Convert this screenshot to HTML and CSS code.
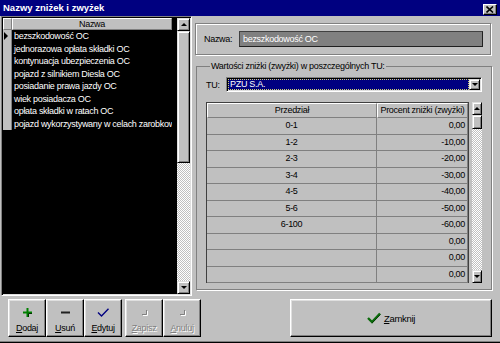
FILE: index.html
```html
<!DOCTYPE html>
<html lang="pl">
<head>
    <meta charset="UTF-8">
    <meta name="viewport" content="width=device-width, initial-scale=1.0">
    <title>Nazwy zniżek i zwyżek</title>
    <link rel="stylesheet" href="styles.css">
</head>
<body>
<div id="window">
    <div id="titlebar">
        <span class="title">Nazwy zniżek i zwyżek</span>
        <span class="close-btn">
            <svg width="8" height="7" viewBox="0 0 8 7"><path d="M0.5 0.5 L7 6.5 M7 0.5 L0.5 6.5" stroke="#000" stroke-width="1.6"/></svg>
        </span>
    </div>

    <div id="main">
        <!-- lista nazw -->
        <div class="list">
            <div class="list-grid">
                <div class="list-head">
                    <span class="ind-head"></span>
                    <span class="name-head">Nazwa</span>
                </div>
                <div class="list-row"><span class="ind"><span class="arrow-right"></span></span><span class="cell">bezszkodowość OC</span></div>
                <div class="list-row"><span class="ind"></span><span class="cell">jednorazowa opłata składki OC</span></div>
                <div class="list-row"><span class="ind"></span><span class="cell">kontynuacja ubezpieczenia OC</span></div>
                <div class="list-row"><span class="ind"></span><span class="cell">pojazd z silnikiem Diesla OC</span></div>
                <div class="list-row"><span class="ind"></span><span class="cell">posiadanie prawa jazdy OC</span></div>
                <div class="list-row"><span class="ind"></span><span class="cell">wiek posiadacza OC</span></div>
                <div class="list-row"><span class="ind"></span><span class="cell">opłata składki w ratach OC</span></div>
                <div class="list-row"><span class="ind"></span><span class="cell">pojazd wykorzystywany w celach zarobkowych OC</span></div>
            </div>
            <div class="vscroll">
                <div class="sb-btn"><span class="tri-up"></span></div>
                <div class="sb-thumb list-thumb"></div>
                <div class="sb-track"></div>
                <div class="sb-btn"><span class="tri-down"></span></div>
            </div>
        </div>

        <div class="right">
            <div class="name-group">
                <span class="name-label">Nazwa:</span>
                <div class="name-input">bezszkodowość OC</div>
            </div>

            <fieldset class="values">
                <legend>Wartości zniżki (zwyżki) w poszczególnych TU:</legend>
                <div class="tu-row">
                    <span class="tu-label">TU:</span>
                    <div class="combo">
                        <div class="combo-value"><span class="focus">PZU S.A.</span></div>
                        <div class="combo-btn"><span class="tri-down"></span></div>
                    </div>
                </div>
                <div class="grid-wrap">
                    <div class="grid">
                        <div class="grid-row head">
                            <span class="c1">Przedział</span>
                            <span class="c2">Procent zniżki (zwyżki)</span>
                        </div>
                        <div class="grid-row"><span class="c1">0-1</span><span class="c2">0,00</span></div>
                        <div class="grid-row"><span class="c1">1-2</span><span class="c2">-10,00</span></div>
                        <div class="grid-row"><span class="c1">2-3</span><span class="c2">-20,00</span></div>
                        <div class="grid-row"><span class="c1">3-4</span><span class="c2">-30,00</span></div>
                        <div class="grid-row"><span class="c1">4-5</span><span class="c2">-40,00</span></div>
                        <div class="grid-row"><span class="c1">5-6</span><span class="c2">-50,00</span></div>
                        <div class="grid-row"><span class="c1">6-100</span><span class="c2">-60,00</span></div>
                        <div class="grid-row"><span class="c1"></span><span class="c2">0,00</span></div>
                        <div class="grid-row"><span class="c1"></span><span class="c2">0,00</span></div>
                        <div class="grid-row"><span class="c1"></span><span class="c2">0,00</span></div>
                    </div>
                    <div class="vscroll">
                        <div class="sb-btn"><span class="tri-up"></span></div>
                        <div class="sb-thumb grid-thumb"></div>
                        <div class="sb-track"></div>
                        <div class="sb-btn"><span class="tri-down"></span></div>
                    </div>
                </div>
            </fieldset>
        </div>
    </div>

    <div id="bottom">
        <div class="tools">
            <div class="tool">
                <svg width="9" height="9" viewBox="0 0 9 9"><path d="M3.5 0h2v3.5h3.5v2h-3.5v3.5h-2v-3.5h-3.5v-2h3.5z" fill="#008000"/><path d="M5.5 9V5.5H9" stroke="#003000" stroke-width="1" fill="none"/></svg>
                <span><u>D</u>odaj</span>
            </div>
            <div class="tool">
                <svg width="9" height="9" viewBox="0 0 9 9"><rect x="0" y="3.5" width="9" height="2" fill="#202020"/></svg>
                <span><u>U</u>suń</span>
            </div>
            <div class="tool">
                <svg width="12" height="9" viewBox="0 0 12 9"><path d="M1 4.5 L4.5 8 L11.5 0.8" stroke="#000080" stroke-width="1.4" fill="none"/></svg>
                <span><u>E</u>dytuj</span>
            </div>
            <div class="tool disabled first-off">
                <svg width="9" height="9" viewBox="0 0 9 9"><path d="M2 6.5 H6.5 V2" stroke="#808080" fill="none"/><path d="M3 7.5 H7.5 V3" stroke="#fff" fill="none"/></svg>
                <span><u>Z</u>apisz</span>
            </div>
            <div class="tool disabled">
                <svg width="9" height="9" viewBox="0 0 9 9"><path d="M2 6.5 H6.5 V2" stroke="#808080" fill="none"/><path d="M3 7.5 H7.5 V3" stroke="#fff" fill="none"/></svg>
                <span><u>A</u>nuluj</span>
            </div>
        </div>
        <div class="close-main">
            <svg width="14" height="12" viewBox="0 0 14 12"><path d="M1 6 L5 10 L13 1.5" stroke="#0a6a0a" stroke-width="2.4" fill="none"/><path d="M5 11 L13.5 2.5" stroke="#003300" stroke-width="0.8" fill="none"/></svg>
            <span><u>Z</u>amknij</span>
        </div>
    </div>
</div>
</body>
</html>
```

FILE: styles.css
```css
* {
    box-sizing: border-box;
}
body {
    margin: 0;
    padding: 0;
    background-color: #c0c0c0;
    font-family: "Liberation Sans", Arial, sans-serif;
    font-size: 9px;
    letter-spacing: -0.3px;
    color: #000;
}
#window {
    width: 500px;
    height: 343px;
    display: flex;
    flex-direction: column;
    overflow: hidden;
    box-shadow: inset 0 -1px #000, inset 0 -2px #808080;
}

/* pasek tytułu */
#titlebar {
    height: 16px;
    background-color: #000080;
    color: white;
    display: flex;
    align-items: center;
    justify-content: space-between;
    padding: 0 3px 0 3px;
}
.title {
    font-weight: bold;
    font-size: 9.5px;
    letter-spacing: 0;
    line-height: 16px;
}
.close-btn {
    width: 14px;
    height: 11px;
    margin-top: 3px;
    background-color: #c0c0c0;
    border: 1px solid;
    border-color: #fff #000 #000 #fff;
    box-shadow: inset -1px -1px #808080;
    display: flex;
    align-items: center;
    justify-content: center;
}

#main {
    height: 282px;
    display: flex;
    padding-left: 1px;
}

/* lista po lewej */
.list {
    width: 191px;
    height: 280px;
    display: flex;
    border: 1px solid;
    border-color: #808080 #fff #fff #808080;
    box-shadow: inset 1px 1px #000, inset -1px -1px #dfdfdf;
    padding: 1px;
}
.list-grid {
    flex-grow: 1;
    background-color: #000;
    overflow: hidden;
}
.list-head {
    height: 12px;
    display: flex;
}
.ind-head, .name-head {
    background-color: #c0c0c0;
    border: 1px solid;
    border-color: #fff #808080 #808080 #fff;
}
.ind-head {
    width: 9px;
}
.name-head {
    width: 160px;
    text-align: center;
    line-height: 10px;
}
.list-row {
    height: 12.5px;
    display: flex;
}
.ind {
    width: 9px;
    background-color: #c0c0c0;
    border-right: 1px solid #808080;
    display: flex;
    align-items: center;
}
.arrow-right {
    width: 0;
    height: 0;
    border-left: 4px solid #000;
    border-top: 4px solid transparent;
    border-bottom: 4px solid transparent;
    margin-left: 1px;
}
.cell {
    width: 160px;
    color: #fff;
    padding-left: 2px;
    line-height: 12.5px;
    white-space: nowrap;
    overflow: hidden;
}

/* paski przewijania */
.vscroll {
    width: 13px;
    display: flex;
    flex-direction: column;
}
.sb-btn, .sb-thumb, .combo-btn {
    background-color: #c0c0c0;
    border: 1px solid;
    border-color: #dfdfdf #000 #000 #dfdfdf;
    box-shadow: inset 1px 1px #fff, inset -1px -1px #808080;
}
.sb-btn {
    height: 13px;
    display: flex;
    align-items: center;
    justify-content: center;
}
.list-thumb {
    height: 132px;
}
.grid-thumb {
    height: 14px;
}
.sb-track {
    flex-grow: 1;
    background: repeating-conic-gradient(#fff 0 25%, #c0c0c0 0 50%) 0 0 / 2px 2px;
}
.tri-up, .tri-down {
    width: 0;
    height: 0;
    border-left: 3px solid transparent;
    border-right: 3px solid transparent;
}
.tri-up {
    border-bottom: 3px solid #000;
}
.tri-down {
    border-top: 3px solid #000;
}

/* prawa strona */
.right {
    width: 298px;
    margin-left: 3px;
    display: flex;
    flex-direction: column;
}
.name-group {
    width: 296px;
    height: 32px;
    margin-top: 7px;
    border: 1px solid #808080;
    box-shadow: inset 1px 1px #fff, 1px 1px #fff;
    display: flex;
    align-items: center;
    padding-left: 8px;
}
.name-label {
    width: 35px;
}
.name-input {
    width: 244px;
    height: 16px;
    background-color: #808080;
    color: #fff;
    border: 1px solid #202020;
    border-top-color: #404040;
    border-left-color: #404040;
    padding-left: 3px;
    line-height: 14px;
}
.values {
    width: 296px;
    margin: 6px 0 0 1px;
    padding: 5px 9px 6px 9px;
    border: 1px solid #808080;
    box-shadow: 1px 1px #fff;
    min-width: 0;
}
.values legend {
    padding: 0 1px;
    margin-left: 4px;
    line-height: 11px;
}
.tu-row {
    height: 15px;
    display: flex;
    align-items: center;
}
.tu-label {
    width: 20px;
}
.combo {
    width: 256px;
    height: 15px;
    display: flex;
    border: 1px solid;
    border-color: #808080 #fff #fff #808080;
    box-shadow: inset 1px 1px #000, inset -1px -1px #dfdfdf;
    padding: 1px;
    background-color: #fff;
}
.combo-value {
    flex-grow: 1;
    background-color: #000080;
    color: #fff;
    display: flex;
    padding: 0;
}
.focus {
    flex-grow: 1;
    border: 1px dotted #d0d070;
    line-height: 9px;
    padding-left: 1px;
}
.combo-btn {
    width: 11px;
    display: flex;
    align-items: center;
    justify-content: center;
}

/* tabela wartości */
.grid-wrap {
    height: 181px;
    margin-top: 10px;
    display: flex;
}
.grid {
    width: 263px;
    margin-right: 3px;
    border: 1px solid #404040;
    background-color: #c0c0c0;
}
.grid-row {
    height: 16.5px;
    display: flex;
}
.grid-row span {
    border-right: 1px solid #808080;
    border-bottom: 1px solid #808080;
    line-height: 15.5px;
    white-space: nowrap;
}
.grid-row .c1 {
    width: 170px;
    text-align: center;
}
.grid-row .c2 {
    width: 91px;
    text-align: right;
    padding-right: 2px;
}
.grid-row.head {
    height: 15px;
}
.grid-row.head span {
    border-top: 1px solid #fff;
    border-left: 1px solid #fff;
    line-height: 13px;
}
.grid-row.head .c2 {
    text-align: center;
    padding-right: 0;
}

/* przyciski na dole */
#bottom {
    display: flex;
    padding-top: 1px;
}
.tools {
    display: flex;
    margin-left: 8px;
}
.tool, .close-main {
    height: 38px;
    background-color: #c0c0c0;
    border: 1px solid;
    border-color: #fff #000 #000 #fff;
    box-shadow: inset -1px -1px #808080, inset 1px 1px #dfdfdf;
}
.tool {
    width: 38px;
    display: flex;
    flex-direction: column;
    align-items: center;
    justify-content: flex-start;
    padding-top: 8px;
}
.tool svg {
    height: 9px;
}
.tool span {
    margin-top: 6px;
    line-height: 11px;
}
.tool.first-off {
    margin-left: 3px;
}
.tool.disabled span {
    color: #808080;
    text-shadow: 1px 1px #fff;
}
.close-main {
    width: 202px;
    margin-left: 89px;
    display: flex;
    align-items: center;
    justify-content: center;
    gap: 3px;
}
.close-main span {
    font-size: 9.5px;
}
```
